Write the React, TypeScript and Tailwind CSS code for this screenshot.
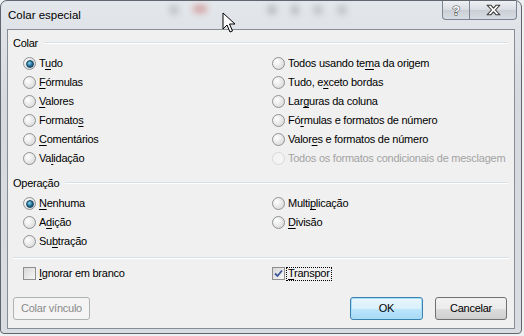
import type { ReactNode } from 'react';

type Item = { text: string; u: number; disabled?: boolean; checked?: boolean };

const pasteLeft: Item[] = [
  { text: 'Tudo', u: 1, checked: true },
  { text: 'Fórmulas', u: 0 },
  { text: 'Valores', u: 0 },
  { text: 'Formatos', u: 7 },
  { text: 'Comentários', u: 0 },
  { text: 'Validação', u: 2 },
];

const pasteRight: Item[] = [
  { text: 'Todos usando tema da origem', u: 15 },
  { text: 'Tudo, exceto bordas', u: 7 },
  { text: 'Larguras da coluna', u: 3 },
  { text: 'Fórmulas e formatos de número', u: 2 },
  { text: 'Valores e formatos de número', u: 5 },
  { text: 'Todos os formatos condicionais de mesclagem', u: -1, disabled: true },
];

const opLeft: Item[] = [
  { text: 'Nenhuma', u: 0, checked: true },
  { text: 'Adição', u: 1 },
  { text: 'Subtração', u: 2 },
];

const opRight: Item[] = [
  { text: 'Multiplicação', u: 5 },
  { text: 'Divisão', u: 0 },
];

function Accel({ text, u }: { text: string; u: number }) {
  if (u < 0) return <>{text}</>;
  return (
    <>
      {text.slice(0, u)}
      <span className="underline underline-offset-[2px] decoration-[1px]">{text[u]}</span>
      {text.slice(u + 1)}
    </>
  );
}

function Radio({ checked, disabled }: { checked?: boolean; disabled?: boolean }) {
  return (
    <span
      className={
        'flex h-[13px] w-[13px] shrink-0 items-center justify-center rounded-full border ' +
        (disabled
          ? 'border-[#d6d8da] bg-[#f4f4f4]'
          : 'border-[#8f9396] bg-[radial-gradient(circle_at_35%_35%,#ffffff,#e6e6e6_55%,#cfd1d3)]')
      }
    >
      {checked && (
        <span className="h-[8px] w-[8px] rounded-full border border-[#16435f] bg-[radial-gradient(circle_at_40%_35%,#8fd8f0,#25749a_50%,#0b3653)]" />
      )}
    </span>
  );
}

function RadioRow({ item }: { item: Item }) {
  return (
    <div className="flex h-[19px] items-center gap-[3px]">
      <Radio checked={item.checked} disabled={item.disabled} />
      <span className={'whitespace-nowrap ' + (item.disabled ? 'text-[#a3a3a3]' : 'text-black')}>
        <Accel text={item.text} u={item.u} />
      </span>
    </div>
  );
}

function Checkbox({ checked }: { checked?: boolean }) {
  return (
    <span className="flex h-[13px] w-[13px] shrink-0 items-center justify-center border border-[#8f8f8f] bg-[linear-gradient(135deg,#d8d8d8,#f6f6f6)]">
      {checked && (
        <svg width="9" height="9" viewBox="0 0 9 9">
          <path d="M1 4.5 L3.5 7 L8 1.5" fill="none" stroke="#3e5698" strokeWidth="1.8" />
        </svg>
      )}
    </span>
  );
}

function GroupHeader({ label }: { label: string }) {
  return (
    <div className="flex h-[16px] items-center gap-[6px] pl-[5px] pr-[6px]">
      <span>{label}</span>
      <div className="flex-1 border-t border-b border-t-[#d5dfe5] border-b-white" />
    </div>
  );
}

function Button({ children, variant = 'normal' }: { children: ReactNode; variant?: 'normal' | 'default' | 'disabled' }) {
  const styles = {
    normal: 'border-[#707070] text-black bg-[linear-gradient(to_bottom,#f2f2f2_0%,#ebebeb_50%,#dddddd_50%,#cfcfcf_100%)]',
    default:
      'border-[#3c7fb1] text-black bg-[linear-gradient(to_bottom,#eaf6fd_0%,#d9f0fc_50%,#bee6fd_50%,#a7d9f5_100%)] shadow-[inset_0_0_0_1px_#a8e0f8]',
    disabled: 'border-[#adb2b5] text-[#8a8a8a] bg-[#f4f4f4]',
  }[variant];
  return (
    <div className={'flex h-[23px] items-center justify-center rounded-[3px] border ' + styles}>{children}</div>
  );
}

function Cursor() {
  return (
    <svg className="absolute left-[222px] top-[12px]" width="14" height="22" viewBox="0 0 14 22">
      <path
        d="M1 1 L1 17 L5 13 L8 20 L10.5 19 L7.5 12 L13 12 Z"
        fill="#fff"
        stroke="#000"
        strokeWidth="1"
        strokeLinejoin="round"
      />
    </svg>
  );
}

export default function App() {
  return (
    <div className="relative h-[336px] w-[524px] overflow-hidden bg-[#eef0f2] text-[11px] leading-none tracking-[-0.25px] font-['Liberation_Sans',Arial,sans-serif]">
      <div className="relative flex h-[334px] w-[522px] flex-col rounded-t-[7px] rounded-b-[4px] border border-[#5f6670] bg-[linear-gradient(to_bottom,#e3e6ea,#d6dade_30%,#d9dde1)]">
        {/* blurred stuff behind the glass */}
        <div className="pointer-events-none absolute left-[168px] top-[4px] flex gap-[14px] opacity-40 blur-[3px]">
          <span className="h-[10px] w-[10px] rounded-full bg-[#8b8f94]" />
          <span className="h-[8px] w-[14px] rounded-full bg-[#c04040]" />
          <span className="ml-[46px] h-[10px] w-[10px] rounded-full bg-[#7b7f84]" />
          <span className="h-[10px] w-[8px] rounded-full bg-[#7b7f84]" />
          <span className="h-[10px] w-[10px] rounded-full bg-[#8b8f94]" />
          <span className="h-[10px] w-[10px] rounded-full bg-[#8b8f94]" />
        </div>

        {/* Title bar */}
        <div className="flex h-[28px] shrink-0 items-start justify-between">
          <span className="mt-[9px] pl-[7px] text-[11.5px] tracking-normal text-black">Colar especial</span>
          <div className="mr-[4px] flex h-[19px]">
            <div className="flex w-[28px] items-center justify-center rounded-bl-[4px] border border-t-0 border-[#7c8593] bg-[linear-gradient(to_bottom,#eef0f3,#d9dde3_50%,#c9ced6_50%,#d8dde3)] text-[13px] font-bold text-white [-webkit-text-stroke:1px_#3c3c3c] [paint-order:stroke_fill]">
              ?
            </div>
            <div className="flex w-[47px] items-center justify-center rounded-br-[4px] border border-l-0 border-t-0 border-[#7c8593] bg-[linear-gradient(to_bottom,#eef0f3,#d9dde3_50%,#c9ced6_50%,#d8dde3)]">
              <svg width="15" height="12" viewBox="0 0 14 11">
                <path
                  d="M1 1 H4.5 L7 3.8 L9.5 1 H13 L8.8 5.5 L13 10 H9.5 L7 7.2 L4.5 10 H1 L5.2 5.5 Z"
                  fill="#fff"
                  stroke="#3c3c3c"
                  strokeWidth="1"
                  strokeLinejoin="round"
                />
              </svg>
            </div>
          </div>
        </div>

        {/* Client area */}
        <div className="mx-[6px] mb-[4px] flex flex-1 flex-col border border-[#878d95] bg-[#f0f0f0] text-black">
          <div className="mt-[5px]">
            <GroupHeader label="Colar" />
          </div>
          <div className="mt-[3px] grid grid-cols-[249px_1fr] pl-[15px]">
            <div className="flex flex-col">
              {pasteLeft.map((it) => (
                <RadioRow key={it.text} item={it} />
              ))}
            </div>
            <div className="flex flex-col">
              {pasteRight.map((it) => (
                <RadioRow key={it.text} item={it} />
              ))}
            </div>
          </div>

          <div className="mt-[7px]">
            <GroupHeader label="Operação" />
          </div>
          <div className="mt-[3px] grid grid-cols-[249px_1fr] pl-[15px]">
            <div className="flex flex-col">
              {opLeft.map((it) => (
                <RadioRow key={it.text} item={it} />
              ))}
            </div>
            <div className="flex flex-col">
              {opRight.map((it) => (
                <RadioRow key={it.text} item={it} />
              ))}
            </div>
          </div>

          <div className="mx-[5px] mt-[6px] border-t border-b border-t-[#d5dfe5] border-b-white" />

          <div className="mt-[5px] grid grid-cols-[249px_1fr] pl-[15px]">
            <div className="flex h-[19px] items-center gap-[3px]">
              <Checkbox />
              <span>
                <Accel text="Ignorar em branco" u={0} />
              </span>
            </div>
            <div className="flex h-[19px] items-center gap-[1px]">
              <Checkbox checked />
              <span className="flex h-[14px] items-center border border-dotted border-black px-[1px]">
                <span>
                  <Accel text="Transpor" u={0} />
                </span>
              </span>
            </div>
          </div>

          <div className="mt-[14px] flex items-center pl-[5px] pr-[7px]">
            <div className="w-[77px]">
              <Button variant="disabled">Colar vínculo</Button>
            </div>
            <div className="ml-auto w-[73px]">
              <Button variant="default">OK</Button>
            </div>
            <div className="ml-[12px] w-[72px]">
              <Button>Cancelar</Button>
            </div>
          </div>
        </div>
      </div>
      <Cursor />
    </div>
  );
}
